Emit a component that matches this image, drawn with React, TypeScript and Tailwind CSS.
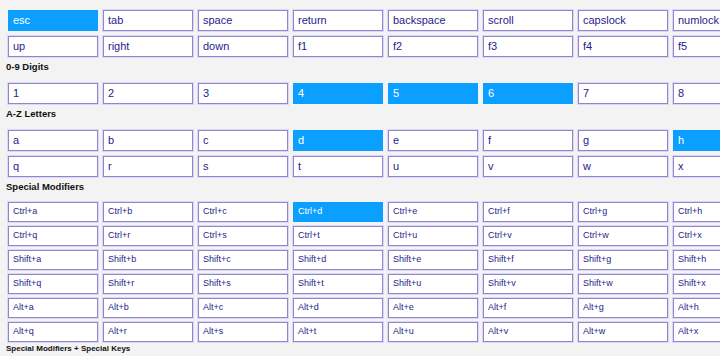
import React from 'react';

const keyRows = [
  ['esc', 'tab', 'space', 'return', 'backspace', 'scroll', 'capslock', 'numlock'],
  ['up', 'right', 'down', 'f1', 'f2', 'f3', 'f4', 'f5'],
];
const digitRow = ['1', '2', '3', '4', '5', '6', '7', '8'];
const letterRows = [
  ['a', 'b', 'c', 'd', 'e', 'f', 'g', 'h'],
  ['q', 'r', 's', 't', 'u', 'v', 'w', 'x'],
];
const modifierRows = ['Ctrl', 'Shift', 'Alt'].flatMap((mod) =>
  letterRows.map((row) => row.map((ch) => `${mod}+${ch}`))
);

const active = new Set(['esc', '4', '5', '6', 'd', 'h', 'Ctrl+d']);

function Key({ label, small }: { label: string; small?: boolean }) {
  const on = active.has(label);
  return (
    <div
      className={`w-[90px] shrink-0 flex items-center pl-[4px] ${small ? 'h-[20px] text-[9px]' : 'h-[21px] text-[11px]'} ${
        on
          ? 'bg-[#0ba0ff] text-white border border-[#0ba0ff]'
          : 'bg-white text-[#261c8c] border border-[#8f86cf] shadow-[0_0_0_1px_#dcd8f2]'
      }`}
    >
      {label}
    </div>
  );
}

function Row({ keys, small }: { keys: string[]; small?: boolean }) {
  return (
    <div className="flex gap-[5px] pl-[8px]">
      {keys.map((k) => (
        <Key key={k} label={k} small={small} />
      ))}
    </div>
  );
}

function Heading({ children, tight }: { children: React.ReactNode; tight?: boolean }) {
  return (
    <h3
      className={`pl-[6px] mt-[3px] ${tight ? 'mb-[8px]' : 'mb-[9px]'} h-[14px] leading-[14px] text-[9.5px] font-bold text-[#111]`}
    >
      {children}
    </h3>
  );
}

export default function App() {
  return (
    <div className="w-[720px] h-[356px] overflow-hidden bg-[#f3f3f3] pt-[10px] font-['Liberation_Sans',Arial,sans-serif]">
      <div className="flex flex-col gap-[5px]">
        {keyRows.map((r, i) => (
          <Row key={i} keys={r} />
        ))}
      </div>

      <Heading>0-9 Digits</Heading>
      <Row keys={digitRow} />

      <Heading>A-Z Letters</Heading>
      <div className="flex flex-col gap-[5px]">
        {letterRows.map((r, i) => (
          <Row key={i} keys={r} />
        ))}
      </div>

      <Heading tight>Special Modifiers</Heading>
      <div className="flex flex-col gap-[4px]">
        {modifierRows.map((r, i) => (
          <Row key={i} keys={r} small />
        ))}
      </div>

      <p className="pl-[6px] mt-[1px] leading-[12px] text-[8px] font-bold text-[#111]">
        Special Modifiers + Special Keys
      </p>
    </div>
  );
}
